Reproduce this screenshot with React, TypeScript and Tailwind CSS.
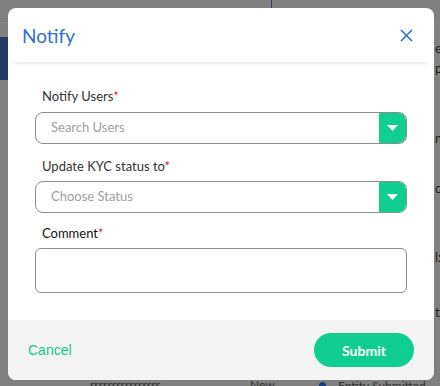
import React from "react";

function Caret() {
  return (
    <div className="w-[27px] self-stretch bg-[#0fce90] flex items-center justify-center rounded-r-[7px]">
      <svg width="11" height="6" viewBox="0 0 11 6"><path d="M0 0 L11 0 L5.5 6 Z" fill="#fff" /></svg>
    </div>
  );
}

export default function App() {
  const font = { fontFamily: "Lato, 'Noto Sans', sans-serif" };
  return (
    <div className="relative w-[440px] h-[386px] bg-[#808080] overflow-hidden" style={font}>
      {/* dimmed background page */}
      <div className="absolute left-0 top-[22px] w-[440px] h-px bg-[#8a8a8a]" />
      <div className="absolute left-0 top-[37px] w-[8px] h-[43px] bg-[#233a63]" />
      <div className="absolute left-[271px] top-0 w-px h-[8px] bg-[#2d3f66]" />
      <div className="absolute left-[435px] top-[42px] text-[13px] text-[#222] leading-none">e</div>
      <div className="absolute left-[435px] top-[62px] text-[13px] text-[#222] leading-none">p</div>
      <div className="absolute left-[435px] top-[132px] text-[13px] text-[#222] leading-none">n</div>
      <div className="absolute left-[435px] top-[182px] text-[13px] text-[#222] leading-none">c</div>
      <div className="absolute left-[435px] top-[251px] text-[13px] text-[#222] leading-none">l:</div>
      <div className="absolute left-[435px] top-[306px] text-[13px] text-[#222] leading-none">t</div>
      <div className="absolute left-[90px] top-[379px] text-[12px] text-[#333] leading-none">rrrrrrrrrrrrrrrr</div>
      <div className="absolute left-[250px] top-[379px] text-[12px] text-[#333] leading-none">New</div>
      <div className="absolute left-[319px] top-[382px] w-[7px] h-[7px] rounded-full bg-[#1d3c78]" />
      <div className="absolute left-[338px] top-[380px] text-[12px] text-[#333] leading-none">Entity Submitted</div>

      {/* modal */}
      <div className="absolute left-[8px] top-[8px] w-[426px] h-[372px] bg-white rounded-[8px] flex flex-col overflow-hidden">
        <div className="h-[54px] mx-[4px] flex items-center justify-between shadow-[0_3px_4px_-2px_rgba(0,0,0,0.12)]">
          <span className="pl-[10px] text-[19px] text-[#3172c8] leading-none">Notify</span>
          <svg width="13" height="13" viewBox="0 0 13 13" className="mr-[17px]">
            <path d="M1 1 L12 12 M12 1 L1 12" stroke="#3172c8" strokeWidth="1.6" fill="none" />
          </svg>
        </div>
        <div className="flex-1 px-[27px] pt-[25px] flex flex-col">
          <label className="pl-[7px] text-[13px] text-[#333] leading-[18px]">
            Notify Users<span className="text-[#e02020]">*</span>
          </label>
          <div className="mt-[7px] h-[32px] flex border border-[#8c8c8c] rounded-[8px] overflow-hidden">
            <div className="flex-1 flex items-center pl-[15px] text-[13px] text-[#a0a0a0]">Search Users</div>
            <Caret />
          </div>
          <label className="mt-[13px] pl-[7px] text-[13px] text-[#333] leading-[18px]">
            Update KYC status to<span className="text-[#e02020]">*</span>
          </label>
          <div className="mt-[6px] h-[32px] flex border border-[#8c8c8c] rounded-[8px] overflow-hidden">
            <div className="flex-1 flex items-center pl-[15px] text-[13px] text-[#a0a0a0]">Choose Status</div>
            <Caret />
          </div>
          <label className="mt-[11px] pl-[7px] text-[13px] text-[#111] leading-[18px]">
            Comment<span className="text-[#e02020]">*</span>
          </label>
          <div className="mt-[6px] h-[45px] border border-[#8c8c8c] rounded-[6px]" />
        </div>
        <div className="h-[60px] bg-[#f4f4f4] flex items-center justify-between pl-[20px] pr-[20px]">
          <span className="text-[14px] text-[#10c98b]" style={{ fontFamily: "'Liberation Sans', Arial, sans-serif" }}>Cancel</span>
          <button className="w-[100px] h-[34px] rounded-full bg-[#0fce90] text-white text-[14px] font-bold">Submit</button>
        </div>
      </div>
    </div>
  );
}
